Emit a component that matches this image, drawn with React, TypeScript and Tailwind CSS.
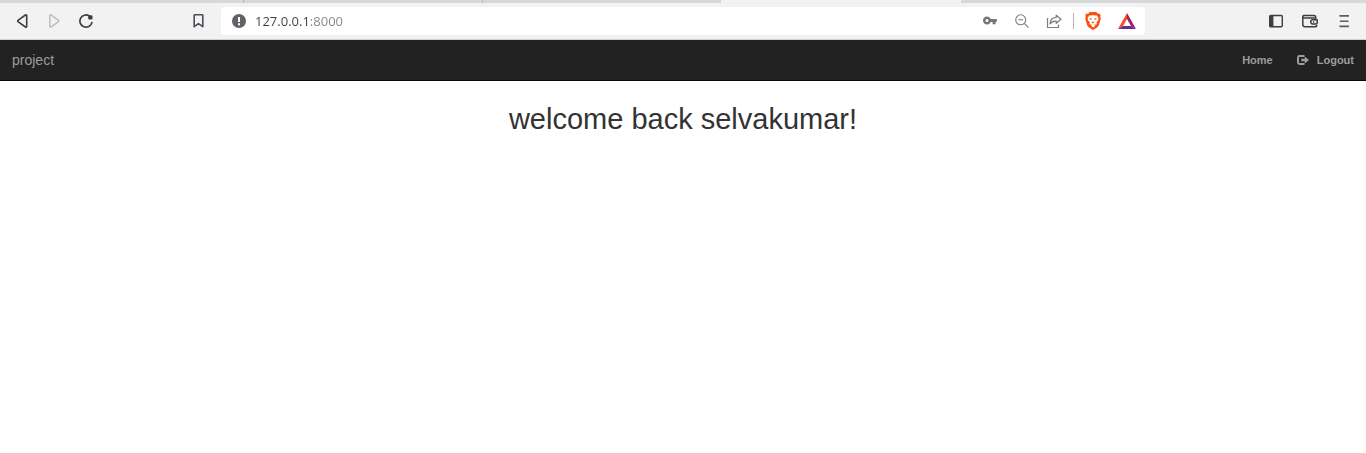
import React from "react";

type IconButtonProps = {
  label: string;
  wide?: boolean;
  disabled?: boolean;
  children: React.ReactNode;
};

function IconButton({ label, wide = false, disabled = false, children }: IconButtonProps) {
  return (
    <button
      type="button"
      aria-label={label}
      disabled={disabled}
      className={`flex h-7 shrink-0 items-center justify-center ${wide ? "w-[34px]" : "w-8"}`}
    >
      {children}
    </button>
  );
}

function BackIcon() {
  return (
    <svg width="16" height="16" viewBox="0 0 16 16" fill="none" stroke="#3b3e42" strokeWidth="1.6" strokeLinejoin="round">
      <path d="M12.700 2.600v10.800c0 .7-.7 1-1.300.6L4 8.700a.9.9 0 0 1 0-1.400L11.400 2c.6-.4 1.300-.1 1.300.6Z" />
    </svg>
  );
}

function ForwardIcon() {
  return (
    <svg width="16" height="16" viewBox="0 0 16 16" fill="none" stroke="#c1c1c3" strokeWidth="1.6" strokeLinejoin="round">
      <path d="M3.800 2.600v10.800c0 .7.7 1 1.300.6l7.400-5.300a.9.9 0 0 0 0-1.400L5.100 2c-.6-.4-1.300-.1-1.300.6Z" />
    </svg>
  );
}

function ReloadIcon() {
  return (
    <svg width="16" height="16" viewBox="0 0 16 16" fill="none">
      <path d="M13.900 9.600A6.100 6.100 0 1 1 11.200 2.900" stroke="#3b3e42" strokeWidth="1.700" strokeLinecap="round" />
      <rect x="10.200" y="2.300" width="4.300" height="4.300" rx="1.400" fill="#3b3e42" />
    </svg>
  );
}

function BookmarkIcon() {
  return (
    <svg width="16" height="16" viewBox="0 0 16 16" fill="none" stroke="#4a4d55" strokeWidth="1.600" strokeLinejoin="round">
      <path d="M4.800 1.800h7.400q.6 0 .6.600v11.300L8.500 10.600l-4.300 3.100V2.400q0-.6.600-.6Z" />
    </svg>
  );
}

function InfoIcon() {
  return (
    <svg width="16" height="16" viewBox="0 0 16 16">
      <circle cx="8" cy="8" r="7" fill="#5f6368" />
      <path d="M7 4h2v5H7zM7 10.3h2v2H7z" fill="#fff" />
    </svg>
  );
}

function KeyIcon() {
  return (
    <svg width="16" height="16" viewBox="0 0 16 16" fill="#757575">
      <path
        fillRule="evenodd"
        d="M8.700 6.100A4 4 0 1 0 8.700 9h1.900v2.300h2.900V9h1.300V6.100ZM5 6.100a1.500 1.500 0 1 1 0 3 1.500 1.500 0 0 1 0-3Z"
      />
    </svg>
  );
}

function ZoomOutIcon() {
  return (
    <svg width="16" height="16" viewBox="0 0 16 16" fill="none" stroke="#7a7d80" strokeWidth="1.1">
      <circle cx="6.7" cy="6.8" r="5" />
      <path d="M4.2 6.8h5M10.3 10.4l4.200 4.200" />
    </svg>
  );
}

function ShareIcon() {
  return (
    <svg width="16" height="16" viewBox="0 0 16 16" fill="none" stroke="#7a7d80" strokeWidth="1.200" strokeLinejoin="round">
      <path d="M1.500 5v9.500h11V11.500" />
      <path d="M10.200 2.200 15 6.200l-4.800 4.100V8.100C7.600 7.900 5.500 8.800 4 11c.2-3.900 2.500-6.300 6.200-6.600Z" />
    </svg>
  );
}

function BraveIcon() {
  return (
    <svg width="16" height="18" viewBox="0 0 16 18">
      <path
        d="M4.700 0h6.600l1.500 1.700 1.500-.2L15.700 3.300l-.5 1.500.6 1.600-1.800 6.400c-.3 1-.9 1.800-1.700 2.400l-3.300 2.300c-.6.500-1.400.500-2 0l-3.300-2.300A4.400 4.400 0 0 1 2 12.800L.2 6.400l.6-1.600-.5-1.500 1.400-1.800 1.500.2Z"
        fill="#fb4f10"
      />
      <path
        d="m4.500 3.300 1.700.3L8 3.100l1.800.5 1.700-.3 2.100 2.600-.4 1.300.2.800-2 2.400.5 1.300-.8 1-1.400-.3-.6.4 1.300.9-2.200 1.700-2.200-1.700 1.300-.9-.6-.4-1.400.3-.8-1 .5-1.300L2.800 8l.2-.8-.4-1.300Z"
        fill="#fff"
      />
      <path d="m4.300 6.100 2.500.5-.3 1.200-1.500-.4ZM11.700 6.100l-2.500.5.300 1.200 1.500-.4ZM6.400 10 8 9.500l1.600.5L8 11.500Z" fill="#fb5422" />
    </svg>
  );
}

function RewardsIcon() {
  return (
    <svg width="18" height="16" viewBox="0 0 18 16">
      <path d="M9 0 0 16l5-3 4-7Z" fill="#ff4724" />
      <path d="M9 0v6l4 7 5 3Z" fill="#9e1f63" />
      <path d="m0 16 5-3h8l5 3Z" fill="#662d91" />
    </svg>
  );
}

function SidebarIcon() {
  return (
    <svg width="16" height="16" viewBox="0 0 16 16">
      <rect x="1.700" y="2.500" width="12.600" height="11.200" rx="1" fill="none" stroke="#3b3e42" strokeWidth="1.400" />
      <path d="M2 3h3.400v10.400H2z" fill="#3b3e42" />
    </svg>
  );
}

function WalletIcon() {
  return (
    <svg width="16" height="16" viewBox="0 0 16 16" fill="none" stroke="#3b3e42" strokeWidth="1.500" strokeLinejoin="round">
      <path d="M13.700 6V4.200a1.800 1.800 0 0 0-1.800-1.800H1.800c-.7 0-1 .4-1 1v8.100a2.300 2.300 0 0 0 2.300 2.300h9.700a1.900 1.900 0 0 0 1.900-1.900" />
      <path d="M1 3.700a1.300 1.300 0 0 0 1.300 1.200h11.200" />
      <path d="M15.200 6.800h-4.300a2.100 2.100 0 0 0 0 4.200h3.300a1 1 0 0 0 1-1Z" />
      <path d="M11 8.900h1.300" />
    </svg>
  );
}

function MenuIcon() {
  return (
    <svg width="16" height="16" viewBox="0 0 16 16" fill="none" stroke="#5a5d62" strokeWidth="1.600">
      <path d="M3.400 2.900h9.600M3.900 8.200h8.600M3.400 13.400h9.600" />
    </svg>
  );
}

function LogoutIcon() {
  return (
    <svg width="12" height="12" viewBox="0 0 12 12">
      <path
        d="M7.500 2H2.600A1.600 1.600 0 0 0 1 3.500v5A1.600 1.600 0 0 0 2.600 10h4.900"
        fill="none"
        stroke="currentColor"
        strokeWidth="2"
      />
      <path d="M4.300 4.800h3.400V2.500L12 6 7.700 9.500V7.200H4.300Z" fill="currentColor" />
    </svg>
  );
}

function BrowserChrome() {
  return (
    <header className="border-b border-[#cfd0d2] bg-[#f2f2f2]">
      <div className="flex h-[3px] bg-[#d5d9dc]">
        <div className="w-[244px] border-r border-[#b4b8bb]" />
        <div className="w-[239px] border-r border-[#b4b8bb]" />
        <div className="w-[238px]" />
        <div className="w-60 bg-[#f2f2f2]" />
      </div>
      <div className="flex items-center py-1 pr-[5px] pl-1.5">
        <IconButton label="Back">
          <BackIcon />
        </IconButton>
        <IconButton label="Forward" disabled>
          <ForwardIcon />
        </IconButton>
        <IconButton label="Reload">
          <ReloadIcon />
        </IconButton>
        <div className="ml-20 flex">
          <IconButton label="Bookmark this page">
            <BookmarkIcon />
          </IconButton>
        </div>
        <div className="ml-[7px] flex h-7 min-w-0 flex-1 items-center rounded bg-white pr-px pl-2.5">
          <InfoIcon />
          <input
            aria-label="Address"
            defaultValue="127.0.0.1:8000"
            spellCheck={false}
            className="ml-2 h-7 min-w-0 flex-1 bg-[linear-gradient(90deg,#3b3e42_55px,#80868b_55px)] bg-clip-text font-['Open_Sans',sans-serif] text-[13px] text-transparent outline-none"
          />
          <IconButton label="Passwords">
            <KeyIcon />
          </IconButton>
          <IconButton label="Zoom">
            <ZoomOutIcon />
          </IconButton>
          <IconButton label="Share">
            <ShareIcon />
          </IconButton>
          <div className="mr-0.5 ml-[3px] h-4 w-px bg-[#b5b5b5]" />
          <IconButton label="Brave Shields" wide>
            <BraveIcon />
          </IconButton>
          <IconButton label="Brave Rewards" wide>
            <RewardsIcon />
          </IconButton>
        </div>
        <div className="ml-[114px] flex">
          <IconButton label="Sidebar" wide>
            <SidebarIcon />
          </IconButton>
          <IconButton label="Wallet" wide>
            <WalletIcon />
          </IconButton>
          <IconButton label="Menu" wide>
            <MenuIcon />
          </IconButton>
        </div>
      </div>
    </header>
  );
}

function Navbar() {
  return (
    <nav className="flex h-[41px] items-center justify-between border-b border-[#080808] bg-[#222222] text-[#9d9d9d]">
      <a href="#" className="px-3 text-sm">
        project
      </a>
      <ul className="flex items-center pr-3 text-[11px] font-bold">
        <li className="mr-6">
          <a href="#home">Home</a>
        </li>
        <li>
          <a href="#logout" className="flex items-center gap-2">
            <LogoutIcon />
            Logout
          </a>
        </li>
      </ul>
    </nav>
  );
}

export default function App() {
  return (
    <div className="min-h-screen bg-white font-['Liberation_Sans',Arial,sans-serif]">
      <BrowserChrome />
      <Navbar />
      <main className="px-3 pt-[22px] text-center">
        <h1 className="text-[29px] leading-8 text-[#333333]">welcome back selvakumar!</h1>
      </main>
    </div>
  );
}
